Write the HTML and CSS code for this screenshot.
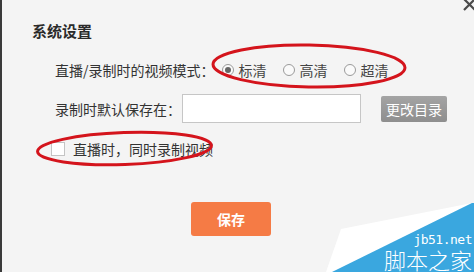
FILE: index.html
```html
<!DOCTYPE html>
<html lang="zh-CN">
<head>
<meta charset="utf-8">
<title>系统设置</title>
<link rel="stylesheet" href="styles.css">
</head>
<body>
<div class="dialog">
  <svg class="close" width="14" height="14" viewBox="0 0 14 14"><path d="M2 1 L13 12 M13 1 L2 12" stroke="#4a4a4a" stroke-width="2.2" fill="none"/></svg>
  <div class="title">系统设置</div>
  <div class="form">
    <div class="row row-mode">
      <span class="label">直播/录制时的视频模式：</span>
      <span class="radio checked"></span><span class="opt">标清</span>
      <span class="radio"></span><span class="opt">高清</span>
      <span class="radio"></span><span class="opt">超清</span>
    </div>
    <div class="row row-path">
      <span class="label">录制时默认保存在：</span>
      <span class="input"></span>
      <span class="btn-gray">更改目录</span>
    </div>
    <div class="row row-check">
      <span class="checkbox"></span>
      <span class="check-label">直播时，同时录制视频</span>
    </div>
  </div>
  <div class="btn-save">保存</div>
  <svg class="marks" width="472" height="272" viewBox="0 0 472 272">
    <ellipse cx="307" cy="66" rx="96" ry="21" fill="none" stroke="#d4141c" stroke-width="3" transform="rotate(1 307 66)"/>
    <ellipse cx="122.5" cy="148.5" rx="87" ry="16" fill="none" stroke="#d4141c" stroke-width="3" transform="rotate(-2 122.5 148.5)"/>
  </svg>
  <svg class="watermark" width="150" height="72" viewBox="0 0 150 72">
    <polygon points="17,29 148,3 10,72 2,72" fill="#ffffff"/>
    <polygon points="148,3 150,3 150,72 8,72" fill="#3aa7df"/>
  </svg>
  <div class="wm-text">
    <span class="wm-url">jb51.net</span>
    <span class="wm-name">脚本之家</span>
  </div>
</div>
</body>
</html>
```
FILE: styles.css
```css
html, body {
  margin: 0;
  padding: 0;
  background: #f4f4f4;
}
.dialog {
  position: relative;
  width: 474px;
  height: 272px;
  box-sizing: border-box;
  border-left: 2px solid #3a3a3a;
  background: #f4f4f4;
  overflow: hidden;
  font-family: "Noto Sans CJK SC", "Noto Sans", sans-serif;
  color: #333;
}
.close {
  position: absolute;
  right: -2px;
  top: -2px;
}
.title {
  padding: 22px 0 0 30px;
  font-size: 15px;
  font-weight: bold;
  line-height: 18px;
  color: #2a2a2a;
}
.form {
  padding-left: 53px;
}
.row {
  display: flex;
  align-items: center;
  font-size: 14px;
}
.row-mode {
  margin-top: 20px;
  height: 20px;
}
.row-mode .label {
  margin-right: 7px;
}
.radio {
  width: 10px;
  height: 10px;
  border: 1px solid #9a9a9a;
  border-radius: 50%;
  background: #fafafa;
  box-sizing: content-box;
  display: flex;
  align-items: center;
  justify-content: center;
  margin-right: 5px;
}
.radio.checked::after {
  content: "";
  width: 6px;
  height: 6px;
  border-radius: 50%;
  background: #666;
}
.opt {
  margin-right: 16px;
  color: #444;
}
.row-path {
  margin-top: 14px;
  height: 29px;
}
.row-path .label {
  margin-right: 1px;
}
.input {
  width: 177px;
  height: 27px;
  border: 1px solid #c6c6c6;
  background: #fff;
}
.btn-gray {
  margin-left: 20px;
  width: 66px;
  height: 26px;
  border-radius: 2px;
  background: linear-gradient(#a4a4a4, #8e8e8e);
  color: #fff;
  font-size: 14px;
  display: flex;
  align-items: center;
  justify-content: center;
}
.row-check {
  margin-top: 18px;
  margin-left: -4px;
  height: 16px;
}
.checkbox {
  width: 12px;
  height: 12px;
  border: 1px solid #c4c4c4;
  background: #fff;
  margin-right: 8px;
}
.check-label {
  color: #333;
}
.btn-save {
  margin: 45px 0 0 189px;
  width: 80px;
  height: 34px;
  border-radius: 3px;
  background: #f57b45;
  color: #fff;
  font-size: 14px;
  font-weight: bold;
  display: flex;
  align-items: center;
  justify-content: center;
}
.marks {
  position: absolute;
  left: 0;
  top: 0;
}
.watermark {
  position: absolute;
  right: 0;
  bottom: 0;
}
.wm-text {
  position: absolute;
  right: 2px;
  bottom: 2px;
  display: flex;
  flex-direction: column;
  align-items: flex-end;
  color: #fff;
}
.wm-url {
  font-family: "DejaVu Sans Mono", monospace;
  font-size: 13px;
  line-height: 14px;
  letter-spacing: -0.5px;
  margin-bottom: 1px;
}
.wm-name {
  font-family: "Noto Sans CJK SC", sans-serif;
  font-size: 22px;
  line-height: 22px;
  font-weight: 300;
}
```
